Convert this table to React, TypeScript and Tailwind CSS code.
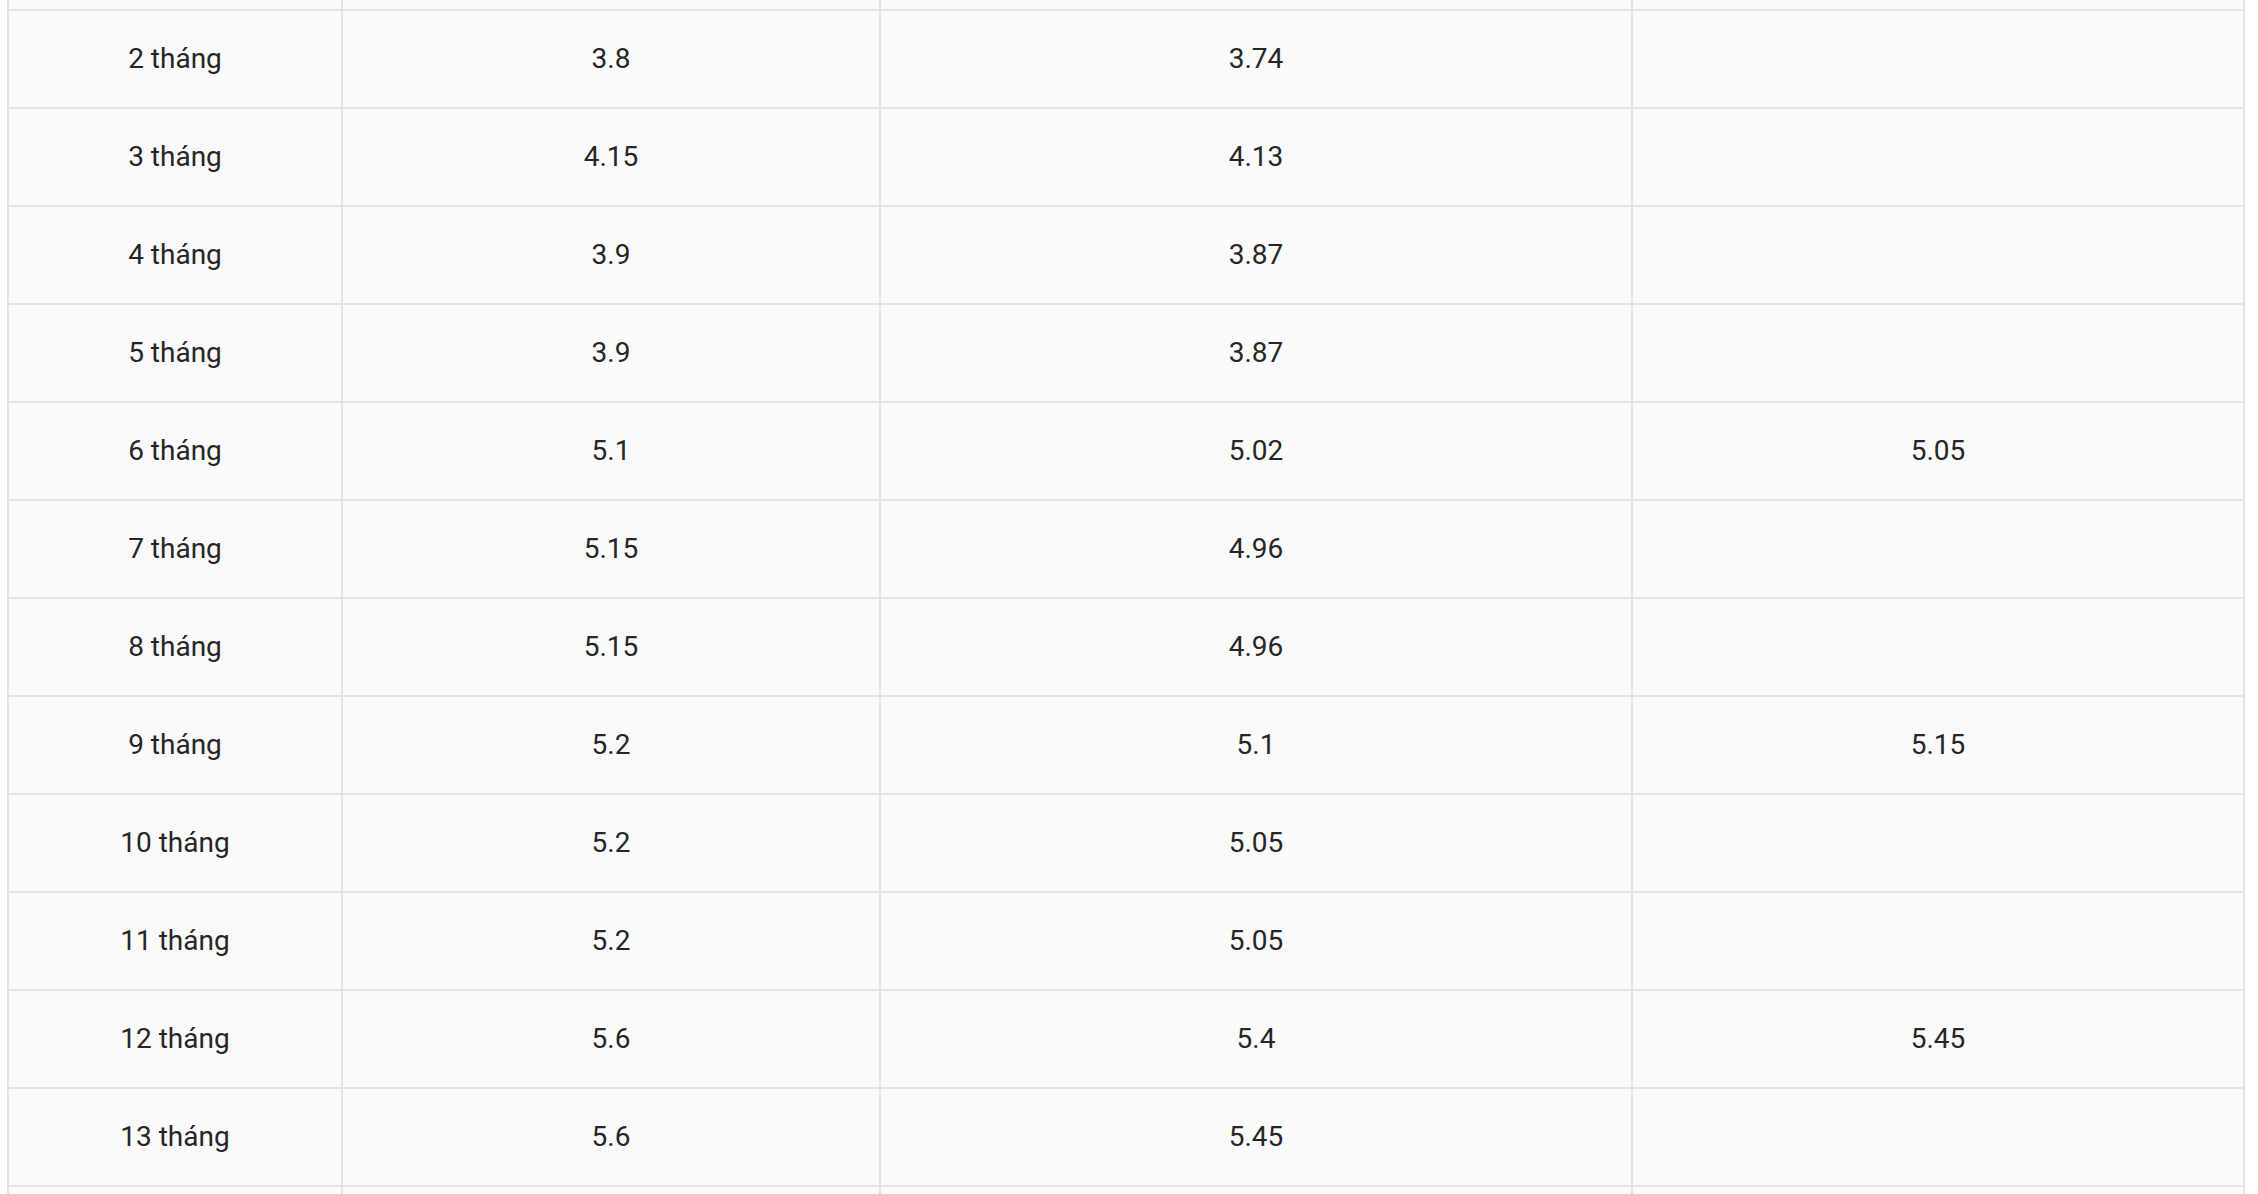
import React from "react";

const rows: [string, string, string, string][] = [
  ["", "", "", ""],
  ["2 tháng", "3.8", "3.74", ""],
  ["3 tháng", "4.15", "4.13", ""],
  ["4 tháng", "3.9", "3.87", ""],
  ["5 tháng", "3.9", "3.87", ""],
  ["6 tháng", "5.1", "5.02", "5.05"],
  ["7 tháng", "5.15", "4.96", ""],
  ["8 tháng", "5.15", "4.96", ""],
  ["9 tháng", "5.2", "5.1", "5.15"],
  ["10 tháng", "5.2", "5.05", ""],
  ["11 tháng", "5.2", "5.05", ""],
  ["12 tháng", "5.6", "5.4", "5.45"],
  ["13 tháng", "5.6", "5.45", ""],
  ["", "", "", ""],
];

export default function App() {
  return (
    <div
      className="h-[1194px] w-[2258px] overflow-hidden bg-white pl-[7px]"
      style={{ fontFamily: "Roboto, 'Noto Sans', sans-serif" }}
    >
      <div className="-mt-[87px] w-[2238px] border-l-2 border-r-2 border-[#e3e3e3] bg-[#fafafa] text-[28px] text-[#262626]">
        {rows.map((r, i) => (
          <div key={i} className="flex h-[98px] border-b-2 border-[#e3e3e3]">
            <div className="flex w-[334px] shrink-0 items-center justify-center border-r-2 border-[#e3e3e3]">
              {r[0]}
            </div>
            <div className="flex w-[538px] shrink-0 items-center justify-center border-r-2 border-[#e3e3e3]">
              {r[1]}
            </div>
            <div className="flex w-[752px] shrink-0 items-center justify-center border-r-2 border-[#e3e3e3]">
              {r[2]}
            </div>
            <div className="flex flex-1 items-center justify-center">{r[3]}</div>
          </div>
        ))}
      </div>
    </div>
  );
}
